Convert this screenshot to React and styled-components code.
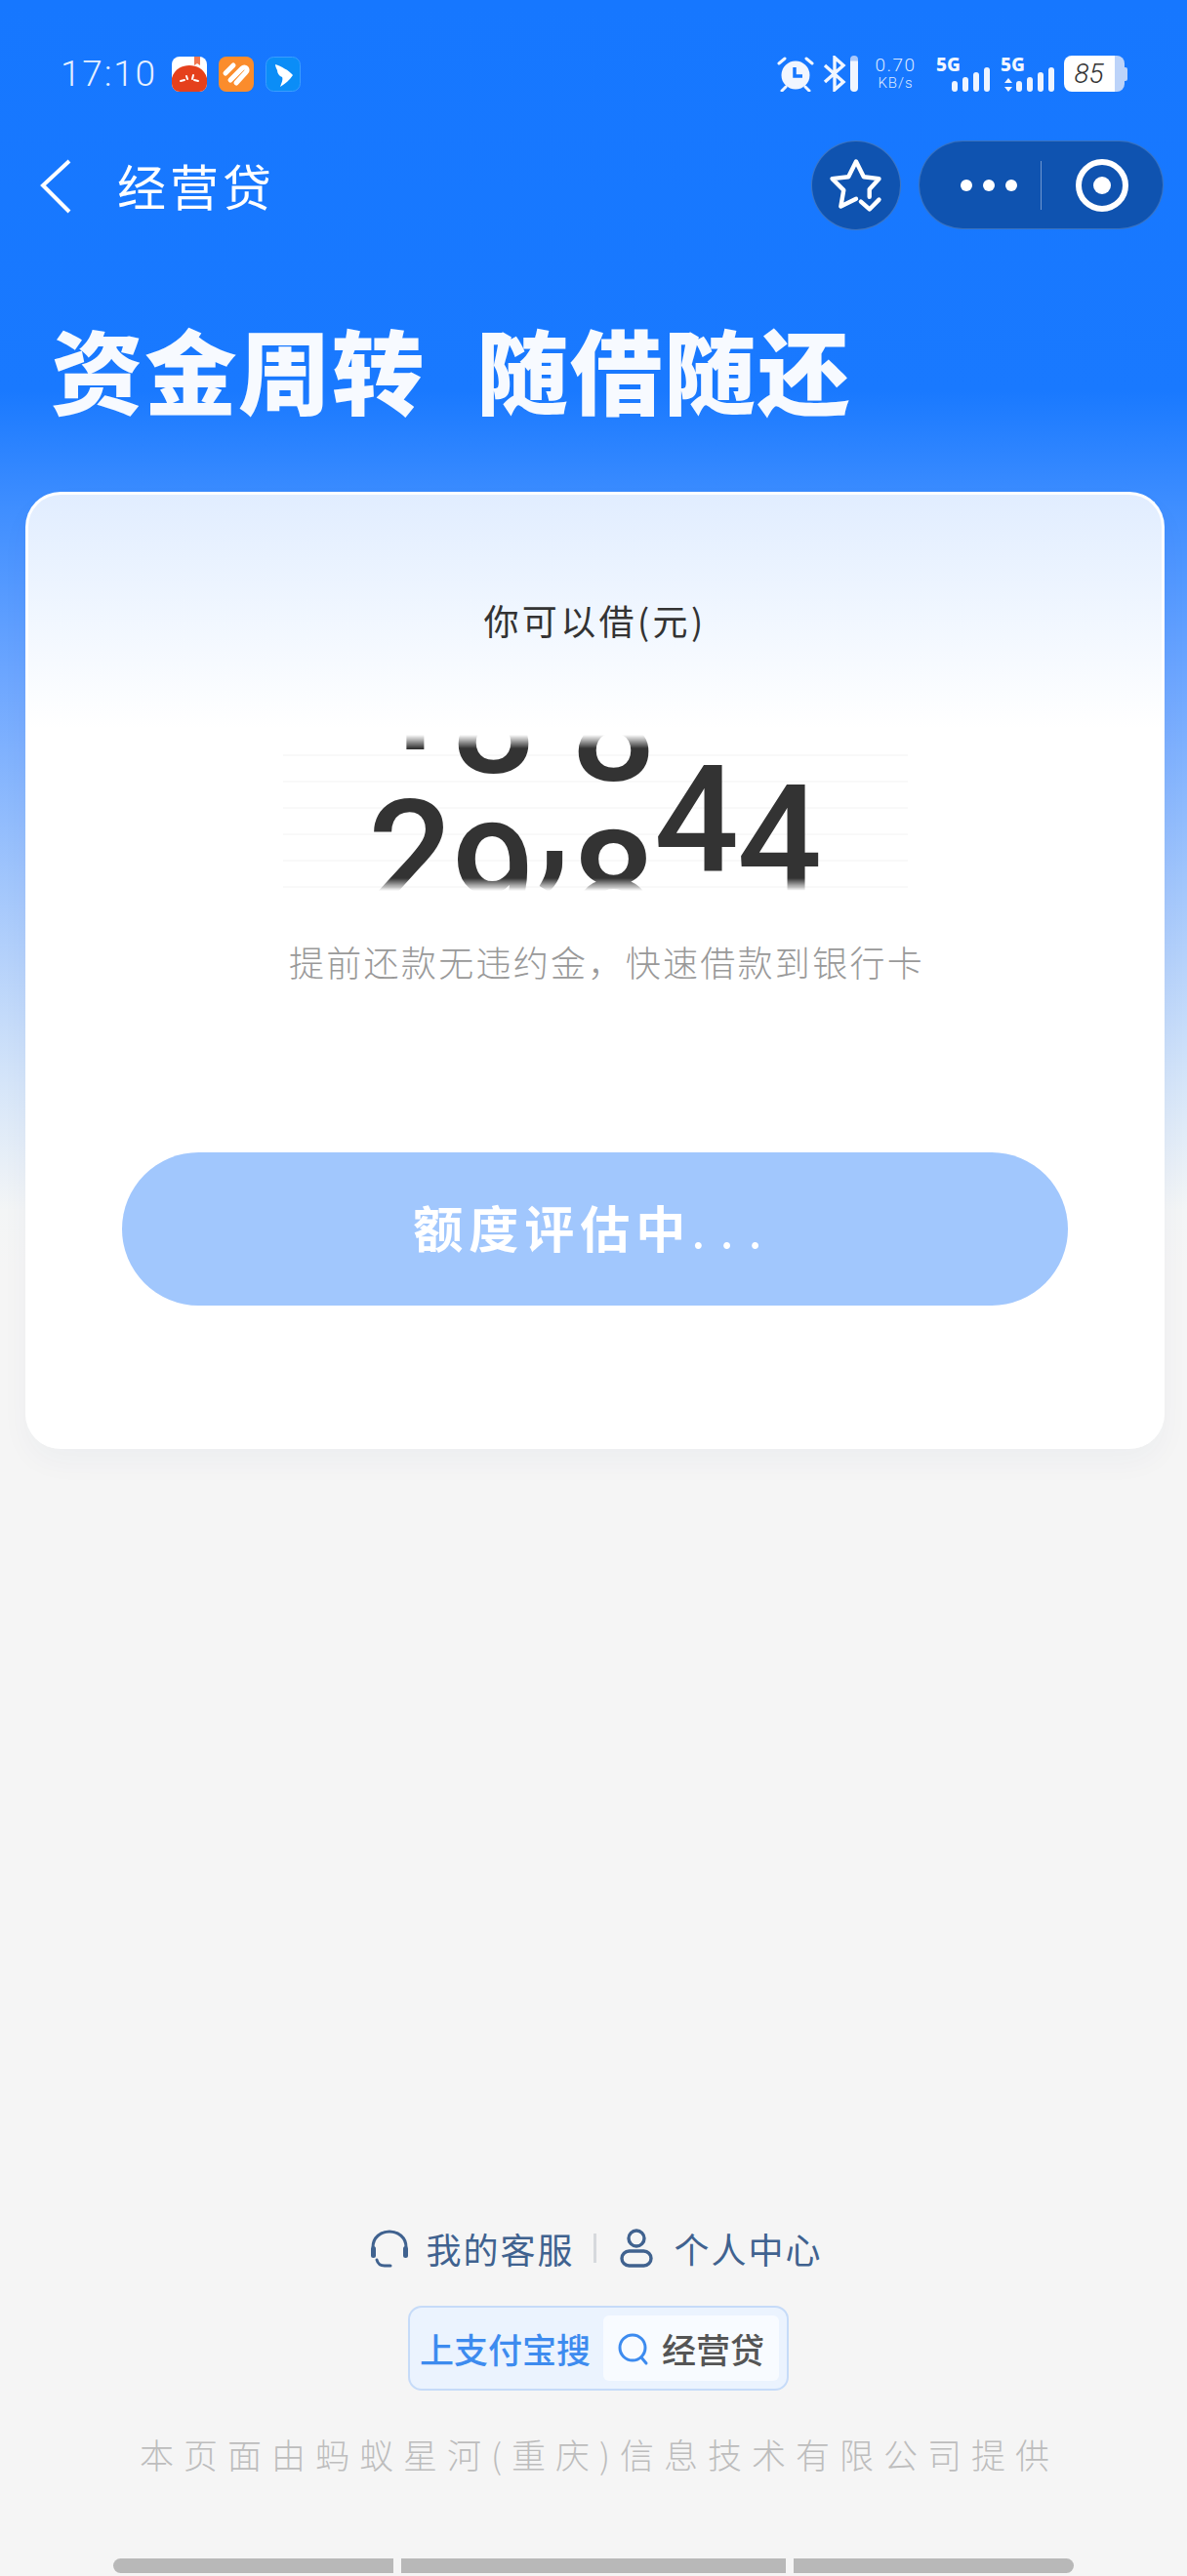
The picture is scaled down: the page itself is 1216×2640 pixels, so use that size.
import React from "react";
import styled, { createGlobalStyle } from "styled-components";

const Global = createGlobalStyle`
  html, body { margin: 0; padding: 0; background: #f5f5f5; }
  #root { width: 1216px; height: 2640px; overflow: hidden; }
  * { box-sizing: border-box; }
`;

const CJK = `"Noto Sans CJK SC", "Noto Sans", sans-serif`;

const Page = styled.div`
  width: 1216px;
  height: 2640px;
  display: flex;
  flex-direction: column;
  font-family: ${CJK};
  background: linear-gradient(180deg, #1677ff 0, #1979ff 400px, #3f8eff 520px, #6ea7ff 700px, #b4d1fb 980px, #d5e5f9 1110px, #f3f5f6 1240px, #f5f5f5 1300px);
`;

/* ---------- status bar ---------- */
const StatusBar = styled.div`
  height: 144px;
  padding: 57px 61px 0 62px;
  display: flex;
  justify-content: space-between;
  align-items: flex-start;
`;
const StatusLeft = styled.div`
  display: flex;
  align-items: center;
  height: 37px;
`;
const Time = styled.span`
  width: 114px;
  font: 300 37px/37px Roboto, sans-serif;
  letter-spacing: 1.8px;
  color: #e6f0ff;
  white-space: nowrap;
`;
const AppIcon = styled.svg`
  width: 36px;
  height: 36px;
  margin-right: 12px;
  display: block;
`;
const StatusRight = styled.div`
  display: flex;
  align-items: center;
  height: 37px;
`;
const Alarm = styled.svg`
  width: 38px;
  height: 37px;
  display: block;
`;
const Bluetooth = styled.svg`
  width: 24px;
  height: 37px;
  margin-left: 9px;
  display: block;
`;
const SlimBar = styled.div`
  width: 8px;
  height: 37px;
  margin-left: 4px;
  border-radius: 4px;
  background: linear-gradient(180deg, #a9c8fb 0, #a9c8fb 5px, #f1f6ff 6px);
`;
const Speed = styled.div`
  width: 43px;
  margin-left: 17px;
  display: flex;
  flex-direction: column;
  align-items: center;
  color: #dce9ff;
  font-family: Roboto, sans-serif;
  font-weight: 300;
  white-space: nowrap;
`;
const SpeedValue = styled.span`
  font-size: 19px;
  line-height: 20px;
  letter-spacing: 1.5px;
`;
const SpeedUnit = styled.span`
  font-size: 15px;
  line-height: 17px;
  letter-spacing: 1px;
`;
const Signal = styled.div`
  width: 55px;
  height: 37px;
  margin-left: ${(p) => p.$gap}px;
  display: grid;
`;
const SignalLabel = styled.span`
  grid-area: 1 / 1;
  justify-self: start;
  align-self: start;
  font: 800 19px/19px "Noto Sans", sans-serif;
  color: #f2f7ff;
`;
const Bars = styled.div`
  grid-area: 1 / 1;
  justify-self: end;
  align-self: end;
  display: flex;
  align-items: flex-end;
  gap: 5px;
`;
const Bar = styled.i`
  display: block;
  width: 6px;
  height: ${(p) => p.$h}px;
  border-radius: 3px;
  background: #eef4ff;
`;
const Arrows = styled.svg`
  width: 8px;
  height: 14px;
  display: block;
  margin-right: -1px;
`;
const Battery = styled.div`
  margin-left: 10px;
  display: flex;
  align-items: center;
`;
const BatteryBody = styled.div`
  width: 62px;
  height: 37px;
  padding-right: 11px;
  border-radius: 8px;
  display: flex;
  align-items: center;
  justify-content: center;
  background: linear-gradient(90deg, #fff 0, #fff 52px, #bcd3f9 52px);
  font: italic 300 28px/37px Roboto, sans-serif;
  color: #333;
`;
const BatteryNub = styled.div`
  width: 3px;
  height: 14px;
  border-radius: 0 2px 2px 0;
  background: #bcd3f9;
`;

/* ---------- nav bar ---------- */
const NavBar = styled.div`
  height: 91px;
  padding: 0 24px 0 41px;
  display: flex;
  align-items: center;
`;
const Back = styled.svg`
  width: 33px;
  height: 56px;
  display: block;
  margin-top: 3px;
`;
const NavTitle = styled.h1`
  margin: 0 0 0 46px;
  flex: 1;
  font-size: 50px;
  line-height: 91px;
  font-weight: 400;
  letter-spacing: 4px;
  color: #fff;
`;
const FavButton = styled.div`
  width: 92px;
  height: 92px;
  border-radius: 50%;
  background: #0f53b0;
  border: 1px solid rgba(255, 255, 255, 0.2);
  flex: none;
`;
const FavIcon = styled.svg`
  width: 90px;
  height: 90px;
  display: block;
`;
const Capsule = styled.div`
  width: 251px;
  height: 91px;
  margin-left: 18px;
  border-radius: 46px;
  border: 1px solid rgba(255, 255, 255, 0.18);
  background: #0f53b0;
  display: flex;
  align-items: center;
`;
const DotsGroup = styled.div`
  width: 124px;
  display: flex;
  justify-content: center;
  gap: 11px;
  padding-left: 17px;
`;
const Dot = styled.i`
  width: 12px;
  height: 12px;
  border-radius: 50%;
  background: #fff;
`;
const CapsuleDivider = styled.div`
  width: 1px;
  height: 50px;
  background: rgba(255, 255, 255, 0.4);
`;
const RingWrap = styled.div`
  flex: 1;
  display: flex;
  justify-content: center;
  padding-right: 1px;
`;
const Ring = styled.div`
  width: 54px;
  height: 54px;
  border: 6px solid #fff;
  border-radius: 50%;
  display: flex;
  align-items: center;
  justify-content: center;
`;
const RingDot = styled.i`
  width: 18px;
  height: 18px;
  border-radius: 50%;
  background: #fff;
`;

/* ---------- headline ---------- */
const Headline = styled.h2`
  margin: 0;
  height: 269px;
  padding: 80px 0 0 52px;
  display: flex;
  gap: 52px;
  font-size: 94.5px;
  line-height: 124px;
  font-weight: 900;
  letter-spacing: 1.5px;
  color: #f7faff;
  align-items: flex-start;
  white-space: nowrap;
`;

/* ---------- card ---------- */
const Card = styled.section`
  width: 1167px;
  height: 981px;
  margin-left: 26px;
  border-radius: 36px;
  border: 3px solid #fff;
  border-bottom: none;
  background: linear-gradient(180deg, #e1edff 0, #f1f7ff 130px, #fff 240px);
  box-shadow: 0 14px 30px rgba(40, 70, 110, 0.035);
  display: flex;
  flex-direction: column;
  align-items: center;
  padding-top: 102px;
`;
const CardLabel = styled.div`
  font-size: 36px;
  line-height: 52px;
  font-weight: 400;
  color: #333;
  letter-spacing: 3.4px;
  white-space: nowrap;
`;
const AmountField = styled.div`
  margin-top: 87px;
  width: 640px;
  height: 170px;
  padding-top: 5px;
  display: flex;
  justify-content: center;
  background: repeating-linear-gradient(180deg, transparent 0, transparent 25px, #f9f9f9 25px, #f9f9f9 27px);
`;
const Amount = styled.div`
  height: 160px;
  display: flex;
  margin-left: -2px;
  -webkit-mask-image: linear-gradient(180deg, transparent 0, #000 14px, #000 147px, transparent 160px);
  mask-image: linear-gradient(180deg, transparent 0, #000 14px, #000 147px, transparent 160px);
`;
const Wheel = styled.div`
  width: ${(p) => p.$w}px;
  height: 160px;
  overflow: hidden;
  font: 500 153px/160px Roboto, sans-serif;
  letter-spacing: -2px;
  color: #333;
  text-align: center;
`;
const Strip = styled.div`
  display: flex;
  flex-direction: column;
  transform: translateY(${(p) => p.$y}px);
`;
const StripDigit = styled.span`
  display: block;
  height: 160px;
`;
const CardNote = styled.div`
  margin-top: 41px;
  margin-left: 24px;
  font-size: 36px;
  line-height: 52px;
  letter-spacing: 2.3px;
  font-weight: 300;
  color: #999;
  white-space: nowrap;
`;
const Evaluate = styled.div`
  margin-top: 170px;
  width: 969px;
  height: 157px;
  padding-bottom: 5px;
  border-radius: 79px;
  background: #a1c7fd;
  display: flex;
  align-items: center;
  justify-content: center;
  color: #fff;
  font-size: 51px;
  font-weight: 700;
  letter-spacing: 6px;
  white-space: nowrap;
`;
const EvaluateDots = styled.span`
  font-weight: 400;
  letter-spacing: 15px;
`;

/* ---------- footer ---------- */
const Footer = styled.footer`
  margin-top: auto;
  display: flex;
  flex-direction: column;
  align-items: center;
  padding-bottom: 3px;
`;
const Links = styled.div`
  height: 40px;
  display: flex;
  align-items: center;
  color: #40628f;
  font-size: 36px;
  line-height: 40px;
  letter-spacing: 2px;
  white-space: nowrap;
  margin-left: 5px;
`;
const LinkIcon = styled.svg`
  width: ${(p) => p.$w}px;
  height: 40px;
  display: block;
  margin-right: ${(p) => p.$gap}px;
`;
const LinkDivider = styled.i`
  width: 3px;
  height: 30px;
  margin: 0 24px 0 19px;
  background: #d6d9dd;
`;
const SearchBox = styled.div`
  margin-top: 39px;
  margin-left: 10px;
  width: 390px;
  height: 87px;
  padding: 8px 8px 8px 10px;
  border-radius: 14px;
  border: 2px solid #c6dbf8;
  background: #ebf3fe;
  display: flex;
  align-items: center;
  gap: 13px;
`;
const SearchPrefix = styled.span`
  font-size: 35px;
  line-height: 67px;
  font-weight: 500;
  color: #3d8bef;
  white-space: nowrap;
`;
const SearchField = styled.div`
  flex: 1;
  height: 67px;
  border-radius: 6px;
  background: #f8fbff;
  display: flex;
  align-items: center;
  padding-left: 15px;
  gap: 13px;
  font-size: 35px;
  font-weight: 500;
  color: #555;
  white-space: nowrap;
`;
const SearchGlass = styled.svg`
  width: 32px;
  height: 36px;
  display: block;
  flex: none;
`;
const Legal = styled.div`
  margin-top: 42px;
  margin-left: 12px;
  height: 46px;
  font-size: 35px;
  line-height: 46px;
  font-weight: 300;
  letter-spacing: 10px;
  color: #bdbdbd;
  white-space: nowrap;
`;
const Gestures = styled.div`
  margin-top: 84px;
  display: flex;
  gap: 8px;
`;
const Gesture = styled.i`
  display: block;
  height: 15px;
  width: ${(p) => p.$w}px;
  border-radius: ${(p) => p.$r};
  background: #b8b8b8;
`;

const wheels = [
  { w: 85, y: 43, top: "1", cur: "2" },
  { w: 85, y: 67, top: "8", cur: "9" },
  { w: 38, y: 4, top: "", cur: "," },
  { w: 85, y: 75, top: "8", cur: "8" },
  { w: 85, y: 7, top: "", cur: "4" },
  { w: 85, y: 27, top: "3", cur: "4" },
];

const NOTE = "\u63D0\u524D\u8FD8\u6B3E\u65E0\u8FDD\u7EA6\u91D1\uFF0C\u5FEB\u901F\u501F\u6B3E\u5230\u94F6\u884C\u5361";

export default function App() {
  return (
    <Page>
      <Global />
      <StatusBar>
        <StatusLeft>
          <Time>17:10</Time>
          <AppIcon viewBox="0 0 36 36">
            <rect width="36" height="36" rx="8" fill="#fff" />
            <path d="M0 22C3 12 11 9 18 9s15 3 18 13v6a8 8 0 0 1-8 8H8a8 8 0 0 1-8-8z" fill="#e5401c" />
            <path d="M23 0h6v9l-3-2-3 2z" fill="#f0764f" />
            <path d="M9 25l4-1M15 20l1 3M22 19l-1 4M27 25l-4-1" stroke="#fff" strokeWidth="2" strokeLinecap="round" />
          </AppIcon>
          <AppIcon viewBox="0 0 36 36">
            <rect width="36" height="36" rx="8" fill="#fb8c2c" />
            <path d="M7 17l8-8M12 24L24 12c3-3 7 1 4 4L18 27" stroke="#fff" strokeWidth="5" strokeLinecap="round" fill="none" />
          </AppIcon>
          <AppIcon viewBox="0 0 36 36">
            <rect x="0.5" y="0.5" width="35" height="35" rx="8" fill="#0b8df7" stroke="#3a9dff" />
            <path d="M10 8C16 10 24 14 28 19C25 24 20 28 15 31C17 26 18 23 17 21C14 20 12 17 12 14C11 12 10 10 10 8z" fill="#fff" />
          </AppIcon>
        </StatusLeft>
        <StatusRight>
          <Alarm viewBox="0 0 38 37">
            <circle cx="19" cy="20" r="14.5" fill="#f1f6ff" />
            <path d="M18 12v9h8" stroke="#1677ff" strokeWidth="3.5" fill="none" />
            <path d="M2 8l6-5M30 3l6 5M9 32l-4 4M29 32l4 4" stroke="#f1f6ff" strokeWidth="3" strokeLinecap="round" />
          </Alarm>
          <Bluetooth viewBox="0 0 24 37">
            <path d="M2 10l19 17-9 8V2l9 8L2 27" stroke="#f1f6ff" strokeWidth="3.4" fill="none" />
          </Bluetooth>
          <SlimBar />
          <Speed>
            <SpeedValue>0.70</SpeedValue>
            <SpeedUnit>KB/s</SpeedUnit>
          </Speed>
          <Signal $gap={20}>
            <SignalLabel>5G</SignalLabel>
            <Bars>
              <Bar $h={11} />
              <Bar $h={15} />
              <Bar $h={20} />
              <Bar $h={25} />
            </Bars>
          </Signal>
          <Signal $gap={11}>
            <SignalLabel>5G</SignalLabel>
            <Bars>
              <Arrows viewBox="0 0 8 14">
                <path d="M4 0l4 5H0zM4 14l4-5H0z" fill="#eef4ff" />
              </Arrows>
              <Bar $h={11} />
              <Bar $h={15} />
              <Bar $h={20} />
              <Bar $h={25} />
            </Bars>
          </Signal>
          <Battery>
            <BatteryBody>85</BatteryBody>
            <BatteryNub />
          </Battery>
        </StatusRight>
      </StatusBar>

      <NavBar>
        <Back viewBox="0 0 33 56">
          <path d="M30 2L3 27l27 27" stroke="#fff" strokeWidth="4" fill="none" />
        </Back>
        <NavTitle>经营贷</NavTitle>
        <FavButton>
          <FavIcon viewBox="0 0 92 92">
            <path d="M46 60l-16 8 3-17-12-12 17-2 8-16 8 16 16 2-10 11v8" stroke="#fff" strokeWidth="4.5" fill="none" strokeLinecap="round" strokeLinejoin="round" />
            <path d="M51 63l9 8 10-10" stroke="#fff" strokeWidth="4.5" fill="none" strokeLinecap="round" strokeLinejoin="round" />
          </FavIcon>
        </FavButton>
        <Capsule>
          <DotsGroup>
            <Dot />
            <Dot />
            <Dot />
          </DotsGroup>
          <CapsuleDivider />
          <RingWrap>
            <Ring>
              <RingDot />
            </Ring>
          </RingWrap>
        </Capsule>
      </NavBar>

      <Headline>
        <span>资金周转</span>
        <span>随借随还</span>
      </Headline>

      <Card>
        <CardLabel>你可以借(元)</CardLabel>
        <AmountField>
          <Amount>
            {wheels.map((d, i) => (
              <Wheel key={i} $w={d.w}>
                <Strip $y={d.y - 160}>
                  <StripDigit>{d.top}</StripDigit>
                  <StripDigit>{d.cur}</StripDigit>
                </Strip>
              </Wheel>
            ))}
          </Amount>
        </AmountField>
        <CardNote>{NOTE}</CardNote>
        <Evaluate>
          额度评估中<EvaluateDots>...</EvaluateDots>
        </Evaluate>
      </Card>

      <Footer>
        <Links>
          <LinkIcon $w={42} $gap={16} viewBox="0 0 42 40">
            <path d="M4 19C4 9 12 3 21 3s17 6 17 16" stroke="#40628f" strokeWidth="3" fill="none" />
            <rect x="2" y="18" width="5" height="12" rx="2.5" fill="#40628f" />
            <rect x="35" y="18" width="5" height="12" rx="2.5" fill="#40628f" />
            <path d="M8 32c1 4 4 6 8 6h6" stroke="#40628f" strokeWidth="3" fill="none" strokeLinecap="round" />
          </LinkIcon>
          我的客服
          <LinkDivider />
          <LinkIcon $w={34} $gap={22} viewBox="0 0 34 40">
            <circle cx="17" cy="10" r="8" stroke="#40628f" strokeWidth="3.4" fill="none" />
            <rect x="2" y="23" width="30" height="15" rx="7.5" stroke="#40628f" strokeWidth="3.4" fill="none" />
          </LinkIcon>
          个人中心
        </Links>
        <SearchBox>
          <SearchPrefix>上支付宝搜</SearchPrefix>
          <SearchField>
            <SearchGlass viewBox="0 0 32 36">
              <circle cx="15" cy="17" r="13" stroke="#3d8bef" strokeWidth="3" fill="none" />
              <path d="M24 27l5 6" stroke="#3d8bef" strokeWidth="3" strokeLinecap="round" />
            </SearchGlass>
            经营贷
          </SearchField>
        </SearchBox>
        <Legal>本页面由蚂蚁星河(重庆)信息技术有限公司提供</Legal>
        <Gestures>
          <Gesture $w={287} $r="8px 0 0 8px" />
          <Gesture $w={394} $r="0" />
          <Gesture $w={287} $r="0 8px 8px 0" />
        </Gestures>
      </Footer>
    </Page>
  );
}
